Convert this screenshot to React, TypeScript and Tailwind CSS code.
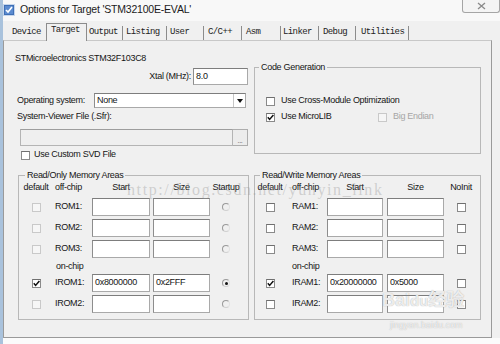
import React from "react";

// Keil uVision "Options for Target" dialog, Target tab

type Tab = { name: string; cls: string; active?: boolean };

const tabs: Tab[] = [
  { name: "Device", cls: "w-[43px] pl-[9px]" },
  { name: "Target", cls: "w-[41px] pl-[4px]", active: true },
  { name: "Output", cls: "w-[36px] pl-[2px] border-r" },
  { name: "Listing", cls: "w-[44px] pl-[3px] border-r" },
  { name: "User", cls: "w-[37px] pl-[3px] border-r" },
  { name: "C/C++", cls: "w-[38px] pl-[4px] border-r" },
  { name: "Asm", cls: "w-[39px] pl-[4px] border-r" },
  { name: "Linker", cls: "w-[38px] pl-[2px] border-r" },
  { name: "Debug", cls: "w-[37px] pl-[4px] border-r" },
  { name: "Utilities", cls: "w-[53px] pl-[5px] border-r" },
];

const field =
  "bg-white border border-[#a9a9a9] border-t-[#7d7d7d] border-l-[#8d8d8d] pl-[2px] flex items-center";

function Check({ on, dim }: { on?: boolean; dim?: boolean }) {
  return (
    <span
      className={
        dim
          ? "w-[9px] h-[9px] flex items-center justify-center border border-[#c9c9c9] bg-[#f6f6f6]"
          : "w-[9px] h-[9px] flex items-center justify-center border border-[#8a8a8a] border-t-[#6f6f6f] bg-white"
      }
    >
      {on && (
        <svg width="7" height="7" viewBox="0 0 7 7">
          <path d="M0.8 3.2 L2.6 5.4 L6.4 0.9" stroke="#111" strokeWidth="1.5" fill="none" />
        </svg>
      )}
    </span>
  );
}

function Radio({ on }: { on?: boolean }) {
  return (
    <span className="w-[8px] h-[8px] rounded-full border border-[#9a9a9a] border-r-[#e2e2e2] border-b-[#d0d0d0] flex items-center justify-center">
      {on && <span className="w-[3px] h-[3px] rounded-full bg-[#111]" />}
    </span>
  );
}

type MemRow = { label: string; start?: string; size?: string; def?: boolean; dim?: boolean; last: React.ReactNode; cls: string };

type Cols = { c1: string; c2: string; cs: string; gap: string; cz: string; c5: string };

function MemGroup({ title, box, legend, cols, lastHead, rows }: {
  title: string;
  box: string;
  legend: string;
  cols: Cols;
  lastHead: string;
  rows: (MemRow | "on-chip")[];
}) {
  return (
    <fieldset className={`${box} border border-[#b8b8b8] pb-[6px]`}>
      <legend className={`${legend} px-[2px] leading-[12px]`}>{title}</legend>
      <div className="flex items-center h-[12px] mt-[1px]">
        <div className={`${cols.c1} text-center`}>default</div>
        <div className={cols.c2}>off-chip</div>
        <div className={`${cols.cs} text-center`}>Start</div>
        <div className={cols.gap} />
        <div className={`${cols.cz} text-center`}>Size</div>
        <div className={`${cols.c5} text-center`}>{lastHead}</div>
      </div>
      {rows.map((r, i) =>
        r === "on-chip" ? (
          <div key={i} className="flex h-[12px] mt-[3px] items-center">
            <div className={cols.c1} />
            <div className={`${cols.c2} pl-[3px]`}>on-chip</div>
          </div>
        ) : (
          <div key={i} className={`flex items-center h-[18px] ${r.cls}`}>
            <div className={`${cols.c1} flex justify-center`}>
              <Check on={r.def} dim={r.dim} />
            </div>
            <div className={cols.c2}>{r.label}</div>
            <div className={`${cols.cs} h-full ${field}`}>{r.start}</div>
            <div className={cols.gap} />
            <div className={`${cols.cz} h-full ${field}`}>{r.size}</div>
            <div className={`${cols.c5} flex justify-center`}>{r.last}</div>
          </div>
        )
      )}
    </fieldset>
  );
}

export default function App() {
  const romCols: Cols = { c1: "w-[34px]", c2: "w-[39px] pl-[2px]", cs: "w-[58px]", gap: "w-[3px]", cz: "w-[57px]", c5: "w-[32px]" };
  const ramCols: Cols = { c1: "w-[30px]", c2: "w-[42px] pl-[7px]", cs: "w-[56px]", gap: "w-[4px]", cz: "w-[57px]", c5: "w-[34px]" };

  return (
    <div className="relative w-[500px] h-[344px] overflow-hidden bg-[#f0f0f0] border-l-[3px] border-[#a9c2dc] flex flex-col font-['Liberation_Sans',Arial,sans-serif] text-[9px] tracking-[-0.3px] text-[#151515]">
      {/* title bar */}
      <div className="h-[21px] bg-[#f8f8f8] flex items-start">
        <svg className="mt-[4px]" width="12" height="12" viewBox="0 0 12 12">
          <rect x="0.5" y="0.5" width="11" height="11" fill="#3f6fb5" stroke="#c6d6ec" />
          <rect x="2" y="2" width="8" height="8" fill="#5b8bd0" />
          <path d="M3 6 L5 8 L9 3" stroke="#fff" strokeWidth="1.6" fill="none" />
        </svg>
        <span className="ml-[5px] mt-[3px] text-[10.5px] tracking-[-0.2px] leading-[13px] text-[#1b1b1b]">
          Options for Target 'STM32100E-EVAL'
        </span>
        <div className="ml-auto w-[38px] h-[13px] border border-t-0 border-[#a5a5a5] rounded-b-[3px] bg-[#f4f4f4] flex items-center justify-center">
          <svg width="9" height="8" viewBox="0 0 9 8">
            <path d="M1 1 L8 7 M8 1 L1 7" stroke="#8a8a8a" strokeWidth="1.3" />
          </svg>
        </div>
      </div>

      {/* tab strip */}
      <div className="h-[19px] flex items-end font-['Liberation_Mono',monospace] text-[9px] tracking-[-0.6px] text-[#222]">
        {tabs.map((t) =>
          t.active ? (
            <div
              key={t.name}
              className={`${t.cls} h-[18px] -mb-px relative bg-[#f0f0f0] border-t border-l border-r border-[#8c8c8c] leading-[12px]`}
            >
              {t.name}
            </div>
          ) : (
            <div key={t.name} className={`${t.cls} h-[14px] border-[#8c8c8c] leading-[13px]`}>
              {t.name}
            </div>
          )
        )}
      </div>

      {/* tab page */}
      <div className="w-[489px] h-[298px] border border-[#9a9a9a] border-t-[#c8c8c8] flex flex-col">
        <div className="h-[128px] flex">
          <div className="w-[250px] pr-[6px] flex flex-col">
            <div className="ml-[11px] mt-[11px] leading-[12px]">STMicroelectronics STM32F103C8</div>
            <div className="mt-[4px] flex justify-end items-center">
              <span className="mr-[2px]">Xtal (MHz):</span>
              <div className={`w-[55px] h-[17px] ${field}`}>8.0</div>
            </div>
            <div className="mt-[8px] flex items-center ml-[13px]">
              <span className="w-[77px]">Operating system:</span>
              <div className={`w-[152px] h-[15px] ${field} pr-0`}>
                <span className="flex-1">None</span>
                <span className="w-[12px] h-full border-l border-[#c6c6c6] flex items-center justify-center">
                  <svg width="6" height="4" viewBox="0 0 6 4">
                    <path d="M0 0 H6 L3 4 Z" fill="#111" />
                  </svg>
                </span>
              </div>
            </div>
            <div className="mt-[2px] ml-[13px] leading-[12px]">System-Viewer File (.Sfr):</div>
            <div className="mt-[7px] ml-[16px] flex h-[17px]">
              <div className="flex-1 bg-[#efefef] border border-[#b4b4b4] border-t-[#9d9d9d]" />
              <div className="w-[15px] bg-[#ececec] border border-l-0 border-[#adadad] flex items-end justify-center text-[7px] leading-[9px] text-[#555]">
                ...
              </div>
            </div>
            <div className="mt-[4px] ml-[17px] flex items-center h-[10px]">
              <Check />
              <span className="ml-[4px]">Use Custom SVD File</span>
            </div>
          </div>

          <fieldset className="w-[227px] h-[93px] mt-[20px] border border-[#b8b8b8]">
            <legend className="ml-[4px] px-[2px] leading-[12px]">Code Generation</legend>
            <div className="mt-[22px] ml-[11px] flex items-center h-[12px]">
              <Check />
              <span className="ml-[6px]">Use Cross-Module Optimization</span>
            </div>
            <div className="mt-[4px] ml-[11px] flex items-center h-[12px]">
              <Check on />
              <span className="ml-[6px] w-[97px]">Use MicroLIB</span>
              <Check dim />
              <span className="ml-[6px] text-[#a6a6a6]">Big Endian</span>
            </div>
          </fieldset>
        </div>

        <div className="flex">
          <MemGroup
            title="Read/Only Memory Areas"
            box="ml-[14px] w-[231px]"
            legend="ml-[6px]"
            cols={romCols}
            lastHead="Startup"
            rows={[
              { label: "ROM1:", dim: true, last: <Radio />, cls: "mt-[4px]" },
              { label: "ROM2:", dim: true, last: <Radio />, cls: "mt-[3px]" },
              { label: "ROM3:", dim: true, last: <Radio />, cls: "mt-[3px]" },
              "on-chip",
              { label: "IROM1:", start: "0x8000000", size: "0x2FFF", def: true, last: <Radio on />, cls: "mt-[1px]" },
              { label: "IROM2:", dim: true, last: <Radio />, cls: "mt-[3px]" },
            ]}
          />
          <MemGroup
            title="Read/Write Memory Areas"
            box="ml-[5px] w-[227px]"
            legend="ml-[5px]"
            cols={ramCols}
            lastHead="NoInit"
            rows={[
              { label: "RAM1:", last: <Check />, cls: "mt-[4px]" },
              { label: "RAM2:", last: <Check />, cls: "mt-[3px]" },
              { label: "RAM3:", last: <Check />, cls: "mt-[3px]" },
              "on-chip",
              { label: "IRAM1:", start: "0x20000000", size: "0x5000", def: true, last: <Check />, cls: "mt-[1px]" },
              { label: "IRAM2:", last: <Check />, cls: "mt-[3px]" },
            ]}
          />
        </div>
      </div>
      <div className="flex-1 bg-[#fbfbfb]" />

      {/* watermarks over the screenshot */}
      <div className="absolute left-[124px] top-[182px] font-['Liberation_Serif',serif] text-[16px] leading-none tracking-[1.6px] text-[#9a9a9a]/40 pointer-events-none">
        http://blog.csdn.net/yunyin_link
      </div>
      <div className="absolute left-[379px] top-[291px] font-['Liberation_Sans','Noto_Sans_CJK_SC',sans-serif] font-bold text-[18px] leading-none tracking-[0px] text-white/80 [text-shadow:0_0_1px_#9a9a9a] pointer-events-none">
        Bai<span className="text-[15px]">du</span>经验
      </div>
      <div className="absolute left-[387px] top-[321px] text-[9px] leading-none tracking-[0px] text-white/80 [text-shadow:0_0_1px_#a0a0a0] pointer-events-none">
        jingyan.baidu.com
      </div>
    </div>
  );
}
